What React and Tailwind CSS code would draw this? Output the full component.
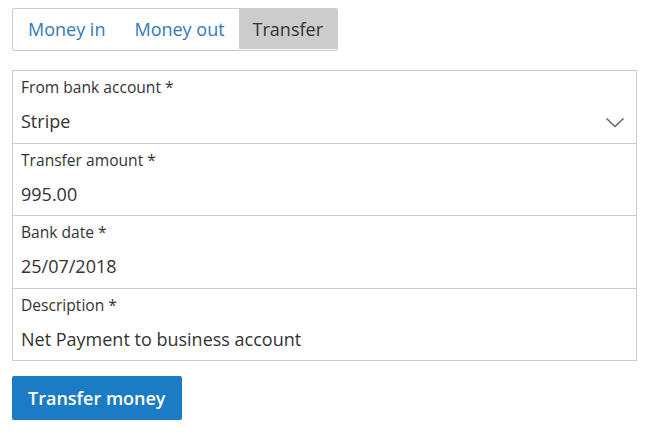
import React from "react";

const font = { fontFamily: '"Open Sans", "Liberation Sans", sans-serif' };

function Row({ label, value, select }) {
  return (
    <div className="pt-[6px] pb-[9.5px] px-[8px]">
      <div className="text-[15.6px] leading-[20px] text-[#333]">{label}</div>
      <div className="mt-[12px] flex items-center justify-between">
        <span className="text-[18px] leading-[24px] text-[#333]">{value}</span>
        {select && (
          <svg width="20" height="12" viewBox="0 0 20 12" className="mr-[3px] mt-[3px]">
            <path d="M1.5 1.5 L10 9.5 L18.5 1.5" fill="none" stroke="#666" strokeWidth="1.6" />
          </svg>
        )}
      </div>
    </div>
  );
}

export default function App() {
  return (
    <div className="bg-white w-[650px] h-[432px] pt-[8px] pl-[12px]" style={font}>
      <div className="inline-flex border border-[#ccc] rounded-[2px] pb-[1px]">
        <div className="px-[15px] h-[40px] leading-[40px] text-[18px] text-[#337ab7]">Money in</div>
        <div className="px-[14px] h-[40px] leading-[40px] text-[18px] text-[#337ab7]">Money out</div>
        <div className="px-[14px] h-[40px] leading-[40px] text-[18px] text-[#333] bg-[#ccc]">Transfer</div>
      </div>
      <div className="mt-[19px] w-[625px] border border-[#ccc] divide-y divide-[#ccc]">
        <Row label="From bank account *" value="Stripe" select />
        <Row label="Transfer amount *" value="995.00" />
        <Row label="Bank date *" value="25/07/2018" />
        <Row label="Description *" value="Net Payment to business account" />
      </div>
      <button className="mt-[15px] h-[44px] px-[16px] rounded-[2px] bg-[#1b7bc4] text-white text-[18px] font-semibold leading-[44px]">
        Transfer money
      </button>
    </div>
  );
}
